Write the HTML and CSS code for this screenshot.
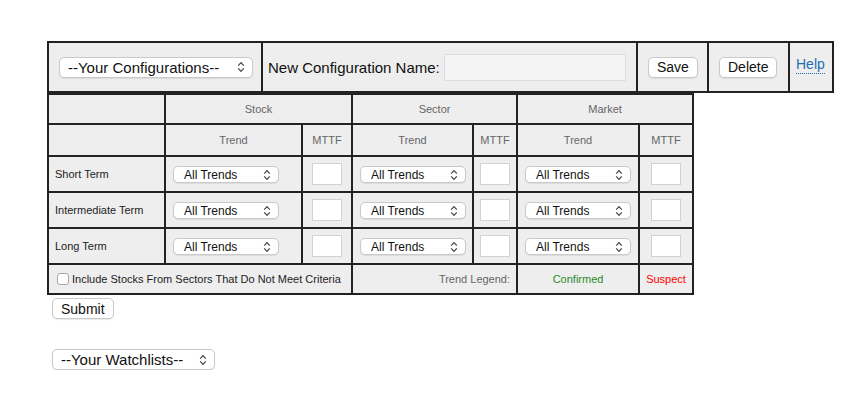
FILE: index.html
```html
<!DOCTYPE html>
<html>
<head>
    <title>Screener Configuration</title>
    <link rel="stylesheet" href="styles.css">
</head>
<body>
    <div class="page">
        <table class="config-bar">
            <colgroup>
                <col class="c-cfg">
                <col class="c-name">
                <col class="c-save">
                <col class="c-delete">
                <col class="c-help">
            </colgroup>
            <tr>
                <td class="cfg-cell">
                    <select class="select select-lg cfg-select"><option>--Your Configurations--</option></select>
                </td>
                <td class="name-cell">
                    <label class="name-label">New Configuration Name:</label>
                    <input type="text" class="name-input">
                </td>
                <td class="btn-cell"><button class="btn">Save</button></td>
                <td class="btn-cell"><button class="btn">Delete</button></td>
                <td class="help-cell"><a class="help" href="#">Help</a></td>
            </tr>
        </table>

        <table class="criteria">
            <colgroup>
                <col class="c-term">
                <col class="c-trend">
                <col class="c-mttf">
                <col class="c-trend2">
                <col class="c-mttf2">
                <col class="c-trend3">
                <col class="c-mttf3">
            </colgroup>
            <tr class="group-row">
                <th></th>
                <th colspan="2">Stock</th>
                <th colspan="2">Sector</th>
                <th colspan="2">Market</th>
            </tr>
            <tr class="sub-row">
                <th></th>
                <th>Trend</th>
                <th>MTTF</th>
                <th>Trend</th>
                <th>MTTF</th>
                <th>Trend</th>
                <th>MTTF</th>
            </tr>
            <tr class="term-row">
                <td class="term">Short Term</td>
                <td class="trend-cell"><select class="select select-sm"><option>All Trends</option></select></td>
                <td class="mttf-cell"><input type="text" class="mttf"></td>
                <td class="trend-cell"><select class="select select-sm"><option>All Trends</option></select></td>
                <td class="mttf-cell"><input type="text" class="mttf"></td>
                <td class="trend-cell"><select class="select select-sm"><option>All Trends</option></select></td>
                <td class="mttf-cell"><input type="text" class="mttf"></td>
            </tr>
            <tr class="term-row">
                <td class="term">Intermediate Term</td>
                <td class="trend-cell"><select class="select select-sm"><option>All Trends</option></select></td>
                <td class="mttf-cell"><input type="text" class="mttf"></td>
                <td class="trend-cell"><select class="select select-sm"><option>All Trends</option></select></td>
                <td class="mttf-cell"><input type="text" class="mttf"></td>
                <td class="trend-cell"><select class="select select-sm"><option>All Trends</option></select></td>
                <td class="mttf-cell"><input type="text" class="mttf"></td>
            </tr>
            <tr class="term-row">
                <td class="term">Long Term</td>
                <td class="trend-cell"><select class="select select-sm"><option>All Trends</option></select></td>
                <td class="mttf-cell"><input type="text" class="mttf"></td>
                <td class="trend-cell"><select class="select select-sm"><option>All Trends</option></select></td>
                <td class="mttf-cell"><input type="text" class="mttf"></td>
                <td class="trend-cell"><select class="select select-sm"><option>All Trends</option></select></td>
                <td class="mttf-cell"><input type="text" class="mttf"></td>
            </tr>
            <tr class="legend-row">
                <td colspan="3" class="include">
                    <label class="include-label"><input type="checkbox" class="check">Include Stocks From Sectors That Do Not Meet Criteria</label>
                </td>
                <td colspan="2" class="legend-title">Trend Legend:</td>
                <td class="confirmed">Confirmed</td>
                <td class="suspect">Suspect</td>
            </tr>
        </table>

        <div class="submit-row">
            <button class="btn">Submit</button>
        </div>

        <div class="watch-row">
            <select class="select select-lg watch-select"><option>--Your Watchlists--</option></select>
        </div>
    </div>
</body>
</html>
```

FILE: styles.css
```css
body {
    margin: 0;
    background: #fff;
    color: #111;
    font-family: "Liberation Sans", Arial, Helvetica, sans-serif;
}

.page {
    padding: 41px 0 0 47px;
}

table {
    border-collapse: separate;
    border-spacing: 0;
    border: 1px solid #222;
    table-layout: fixed;
}

td, th {
    border: 1px solid #222;
    background: #eee;
    padding: 0;
    box-sizing: border-box;
}

/* top bar */
.config-bar {
    width: 787px;
}

.config-bar td {
    height: 50px;
}

.c-cfg { width: 214px; }
.c-name { width: 375px; }
.c-save { width: 71px; }
.c-delete { width: 81px; }
.c-help { width: 44px; }

.cfg-cell {
    padding-left: 10px;
}

.name-cell {
    padding-left: 5px;
    white-space: nowrap;
}

.name-label {
    font-size: 15px;
    color: #111;
    vertical-align: middle;
}

.name-input {
    width: 182px;
    height: 27px;
    box-sizing: border-box;
    margin-left: 0;
    border: 1px solid #ddd;
    background: #f4f4f4;
    vertical-align: middle;
}

.btn-cell {
    padding-left: 10px;
}

.help-cell {
    padding-left: 6px;
}

.help {
    font-size: 14px;
    color: #1f6fb2;
    text-decoration: none;
    border-bottom: 1px dotted #1f6fb2;
    padding-bottom: 1px;
    position: relative;
    top: -3px;
}

/* controls */
.select {
    -webkit-appearance: none;
    appearance: none;
    background: #fff url("data:image/svg+xml;utf8,<svg xmlns='http://www.w3.org/2000/svg' width='8' height='12' viewBox='0 0 8 12'><path d='M1.2 4.6L4 1.6L6.8 4.6M1.2 7.4L4 10.4L6.8 7.4' fill='none' stroke='%23444' stroke-width='1.2'/></svg>") no-repeat right 7px center;
    border: 1px solid #c9c9c9;
    border-radius: 5px;
    box-shadow: 0 1px 1px rgba(0, 0, 0, 0.08);
    color: #111;
    font-family: "Liberation Sans", Arial, Helvetica, sans-serif;
    margin: 0;
    box-sizing: border-box;
}

.select-lg {
    height: 21px;
    font-size: 15px;
    padding: 0 20px 0 8px;
}

.cfg-select {
    width: 194px;
}

.select-sm {
    width: 106px;
    height: 17px;
    font-size: 12px;
    padding: 0 18px 0 10px;
}

.btn {
    background: #fff;
    border: 1px solid #c9c9c9;
    border-radius: 5px;
    box-shadow: 0 1px 1px rgba(0, 0, 0, 0.08);
    font-family: "Liberation Sans", Arial, Helvetica, sans-serif;
    font-size: 14px;
    color: #111;
    height: 21px;
    padding: 0 8px;
    margin: 0;
}

/* criteria table */
.criteria {
    width: 647px;
}

.c-term { width: 117px; }
.c-trend { width: 137px; }
.c-mttf { width: 50px; }
.c-trend2 { width: 121px; }
.c-mttf2 { width: 44px; }
.c-trend3 { width: 122px; }
.c-mttf3 { width: 54px; }

.criteria th {
    font-size: 11px;
    font-weight: normal;
    color: #666;
    text-align: center;
}

.group-row th {
    height: 30px;
}

.sub-row th {
    height: 32px;
}

.term-row td {
    height: 36px;
}

.term {
    font-size: 11px;
    color: #222;
    padding-left: 6px;
}

.trend-cell {
    padding-left: 7px;
}

.mttf-cell {
    text-align: center;
}

.mttf {
    width: 30px;
    height: 22px;
    box-sizing: border-box;
    border: 1px solid #d2d2d2;
    background: #fff;
    margin: 0;
    vertical-align: middle;
}

.legend-row td {
    height: 30px;
    font-size: 11px;
}

.include {
    padding-left: 8px;
}

.include-label {
    color: #222;
    display: flex;
    align-items: center;
    white-space: nowrap;
}

.check {
    -webkit-appearance: none;
    appearance: none;
    width: 12px;
    height: 12px;
    margin: 0 3px 0 0;
    border: 1px solid #a8a8a8;
    border-radius: 3px;
    background: #fff;
}

.legend-title {
    color: #666;
    text-align: right;
    padding-right: 6px;
}

.confirmed {
    color: #2b8a2b;
    text-align: center;
}

.suspect {
    color: #f00;
    text-align: center;
}

/* below */
.submit-row {
    padding: 3px 0 0 5px;
}

.watch-row {
    padding: 30px 0 0 5px;
}

.watch-select {
    width: 163px;
}
```
